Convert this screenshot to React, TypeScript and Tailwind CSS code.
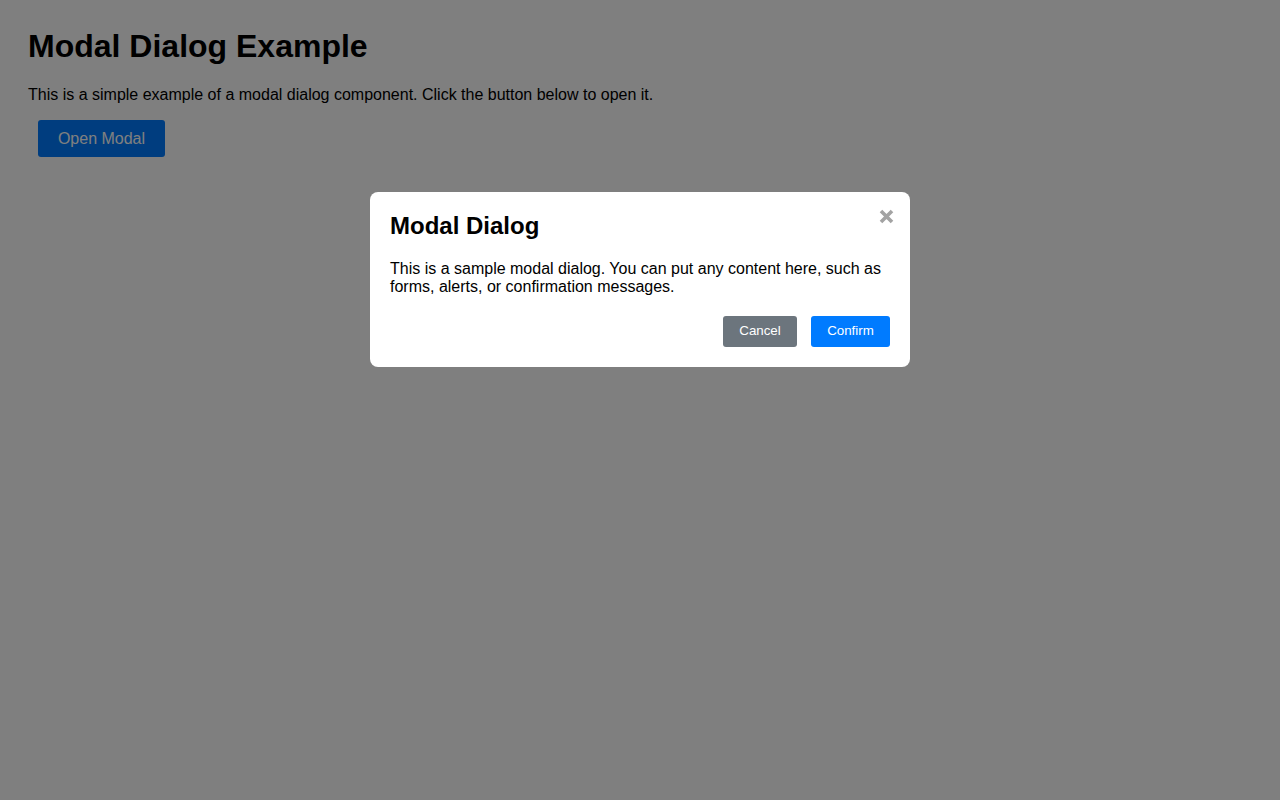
import React from "react";

export default function App() {
  return (
    <div
      className="min-h-screen bg-white p-[28px] text-black"
      style={{ fontFamily: '"Liberation Sans", Arial, sans-serif' }}
    >
      <h1 className="m-0 mb-[21px] text-[32px] font-bold leading-[37px]">Modal Dialog Example</h1>
      <p className="m-0 mb-4 text-[16px] leading-[18.4px]">
        This is a simple example of a modal dialog component. Click the button below to open it.
      </p>
      <button className="ml-[10px] h-[37px] w-[127px] rounded-[3px] bg-[#007bff] text-[16px] text-white">
        Open Modal
      </button>

      <div className="fixed inset-0 flex justify-center bg-black/50 pt-[192px]">
        <div className="relative h-[175px] w-[540px] rounded-[8px] bg-white p-5">
          <svg
            className="absolute right-[16px] top-[17px]"
            width="15"
            height="15"
            viewBox="0 0 15 15"
          >
            <path d="M2 2 L13 13 M13 2 L2 13" stroke="#a3a3a3" strokeWidth="3.6" strokeLinecap="butt" />
          </svg>
          <h2 className="m-0 mb-5 text-[24px] font-bold leading-[27.5px]">Modal Dialog</h2>
          <p className="m-0 text-[16px] leading-[18px]">
            This is a sample modal dialog. You can put any content here, such as forms, alerts, or
            confirmation messages.
          </p>
          <div className="mt-5 flex justify-end gap-[14px]">
            <button className="h-[31px] w-[74px] rounded-[3px] bg-[#6c757d] text-[13.33px] text-white">
              Cancel
            </button>
            <button className="h-[31px] w-[79px] rounded-[3px] bg-[#007bff] text-[13.33px] text-white">
              Confirm
            </button>
          </div>
        </div>
      </div>
    </div>
  );
}
